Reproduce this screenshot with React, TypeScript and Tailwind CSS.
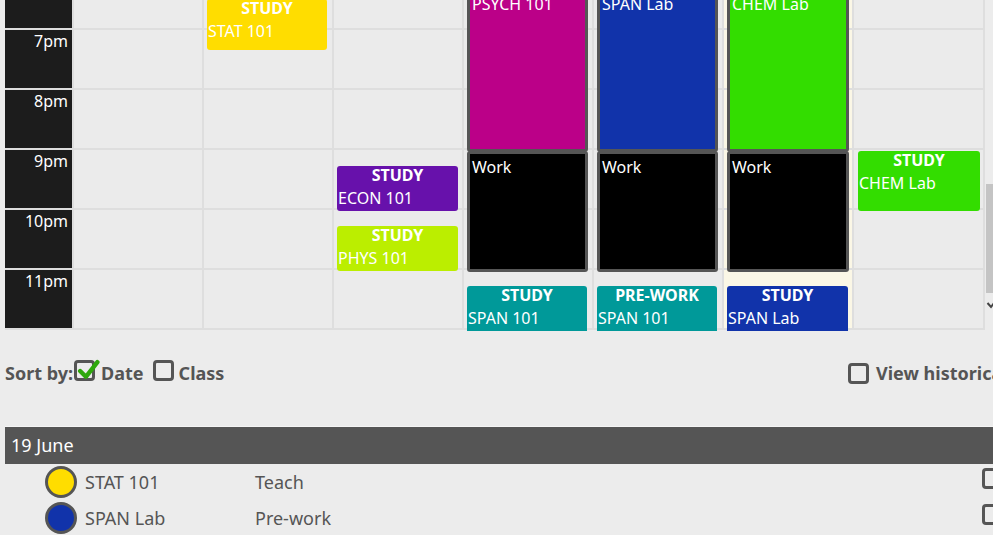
import React from "react";

type CalEvent = {
  col: number;
  top: number;
  height: number;
  left: number;
  width: number;
  color: string;
  kind?: string;
  label: string;
  boxed?: boolean;
};

const HOURS = ["6pm", "7pm", "8pm", "9pm", "10pm", "11pm"];

// day column widths in px
const COLS = [130, 130, 130, 130, 130, 130, 131];

// positions are in px from the 6pm line of the grid
const EVENTS: CalEvent[] = [
  { col: 1, top: 29, height: 51, left: 3, width: 120, color: "bg-[#ffdd00]", kind: "STUDY", label: "STAT 101" },
  { col: 2, top: 196, height: 45, left: 3, width: 121, color: "bg-[#6711ab]", kind: "STUDY", label: "ECON 101" },
  { col: 2, top: 256, height: 45, left: 3, width: 121, color: "bg-[#bbee00]", kind: "STUDY", label: "PHYS 101" },
  { col: 3, top: 18, height: 164, left: 3, width: 121, color: "bg-[#bb0088]", label: "PSYCH 101", boxed: true },
  { col: 3, top: 181, height: 121, left: 3, width: 121, color: "bg-black", label: "Work", boxed: true },
  { col: 3, top: 316, height: 52, left: 3, width: 120, color: "bg-[#009999]", kind: "STUDY", label: "SPAN 101" },
  { col: 4, top: 18, height: 164, left: 3, width: 121, color: "bg-[#1133aa]", label: "SPAN Lab", boxed: true },
  { col: 4, top: 181, height: 121, left: 3, width: 121, color: "bg-black", label: "Work", boxed: true },
  { col: 4, top: 316, height: 52, left: 3, width: 120, color: "bg-[#009999]", kind: "PRE-WORK", label: "SPAN 101" },
  { col: 5, top: 18, height: 164, left: 3, width: 122, color: "bg-[#33dd00]", label: "CHEM Lab", boxed: true },
  { col: 5, top: 181, height: 121, left: 3, width: 122, color: "bg-black", label: "Work", boxed: true },
  { col: 5, top: 316, height: 52, left: 3, width: 121, color: "bg-[#1133aa]", kind: "STUDY", label: "SPAN Lab" },
  { col: 6, top: 181, height: 60, left: 4, width: 122, color: "bg-[#33dd00]", kind: "STUDY", label: "CHEM Lab" },
];

const Checkbox: React.FC<{ checked?: boolean }> = ({ checked }) => (
  <span className="relative inline-block w-[21px] h-[21px] shrink-0 rounded-[4px] border-[3px] border-[#555]">
    {checked && (
      <svg className="absolute left-[0px] top-[-4px] w-[23px] h-[23px]" viewBox="0 0 22 22">
        <path d="M3 11.5 L8.5 17 L19.5 3" fill="none" stroke="#2ea80c" strokeWidth="4.2" strokeLinecap="round" strokeLinejoin="round" />
      </svg>
    )}
  </span>
);

const EventBox: React.FC<{ ev: CalEvent }> = ({ ev }) => {
  if (ev.boxed) {
    return (
      <div
        className={`absolute ${ev.color} border-[3px] border-[#555] rounded-[3px] text-white text-[16px] leading-[20px] px-[2px] pt-[3px]`}
        style={{ top: ev.top, height: ev.height, left: ev.left, width: ev.width }}
      >
        {ev.label}
      </div>
    );
  }
  return (
    <div
      className={`absolute ${ev.color} rounded-[3px] text-white overflow-hidden`}
      style={{ top: ev.top, height: ev.height, left: ev.left, width: ev.width }}
    >
      <div className="text-center font-bold text-[16px] leading-[18px]">{ev.kind}</div>
      <div className="pl-[1px] mt-[4px] text-[16px] leading-[20px]">{ev.label}</div>
    </div>
  );
};

export default function App() {
  return (
    <div className="w-[993px] h-[535px] overflow-hidden bg-[#ececec] font-['Noto_Sans',sans-serif]">
      {/* Calendar */}
      <div className="flex ml-[5px] h-[331px]">
        <div className="w-[980px] h-[331px] overflow-hidden">
          <div className="flex mt-[-30px]">
            {/* Time column */}
            <div className="w-[69px] shrink-0 border-r-2 border-[#dedede]">
              {HOURS.map((h) => (
                <div
                  key={h}
                  className="h-[60px] bg-[#1c1c1c] border-b-2 border-[#dedede] text-white text-[16px] leading-[20px] text-right pr-[4px] pt-[1px]"
                >
                  {h}
                </div>
              ))}
            </div>
            {/* Day columns */}
            {COLS.map((w, i) => (
              <div
                key={i}
                className={`relative shrink-0 ${i === 5 ? "bg-[#fbf7e6]" : "bg-[#ebebeb]"}`}
                style={{ width: w }}
              >
                {HOURS.map((h) => (
                  <div key={h} className="h-[60px] border-b-2 border-r-2 border-[#dedede]" />
                ))}
                {EVENTS.filter((e) => e.col === i).map((ev, k) => (
                  <EventBox key={k} ev={ev} />
                ))}
              </div>
            ))}
          </div>
        </div>
        {/* Scrollbar */}
        <div className="w-[8px] flex flex-col items-end">
          <div className="mt-[184px] h-[109px] w-[7px] bg-[#c4c4c4]" />
          <svg className="mt-[7px] w-[7px] h-[10px]" viewBox="0 0 7 10">
            <path d="M1.5 3 L5 7 L8 3" fill="none" stroke="#444" strokeWidth="2" />
          </svg>
        </div>
      </div>

      {/* Sort bar */}
      <div className="flex items-center mt-[32px] pl-[5px] h-[21px] text-[#555] font-bold text-[18px] whitespace-nowrap">
        <span>Sort by:</span>
        <span className="ml-[1px]">
          <Checkbox checked />
        </span>
        <span className="ml-[6px]">Date</span>
        <span className="ml-[9px]">
          <Checkbox />
        </span>
        <span className="ml-[5px]">Class</span>
        <div className="ml-auto w-[145px] shrink-0 flex items-center gap-[7px]">
          <Checkbox />
          <span>View historical data</span>
        </div>
      </div>

      {/* Agenda list */}
      <div className="ml-[5px] mt-[42px]">
        <div className="h-[38px] bg-[#555] border-t border-[#f5f5f5] text-white text-[18px] leading-[36px] pl-[6px]">
          19 June
        </div>
        {[
          { name: "STAT 101", kind: "Teach", color: "bg-[#ffdd00]" },
          { name: "SPAN Lab", kind: "Pre-work", color: "bg-[#1133aa]" },
        ].map((r) => (
          <div key={r.name} className="flex items-center h-[36px] pl-[40px] text-[#555] text-[18px] whitespace-nowrap">
            <span className={`w-[32px] h-[32px] rounded-full border-[3px] border-[#555] ${r.color}`} />
            <span className="ml-[8px] w-[170px]">{r.name}</span>
            <span>{r.kind}</span>
            <span className="ml-auto mr-[-10px]">
              <Checkbox />
            </span>
          </div>
        ))}
      </div>
    </div>
  );
}
